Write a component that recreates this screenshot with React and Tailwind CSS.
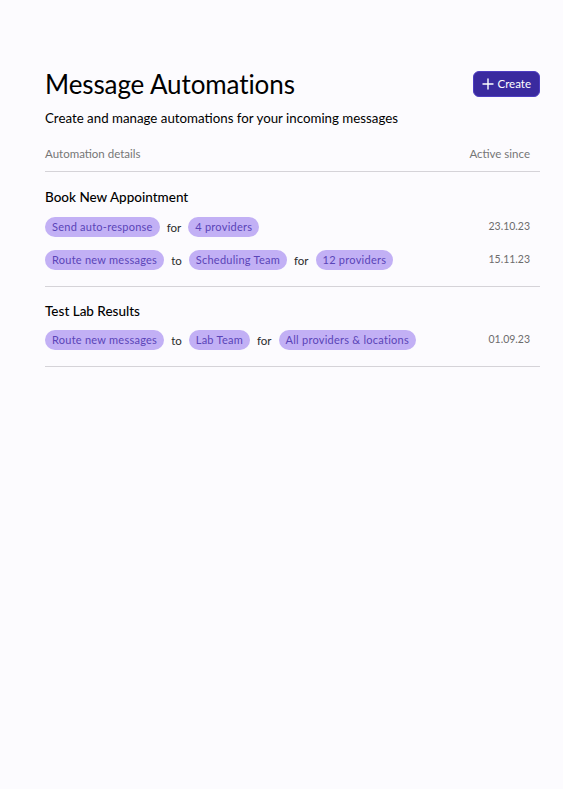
import React from "react";

const automations = [
    {
        name: "Book New Appointment",
        rules: [
            { parts: [["pill", "Send auto-response"], ["word", "for"], ["pill", "4 providers"]], since: "23.10.23" },
            {
                parts: [["pill", "Route new messages"], ["word", "to"], ["pill", "Scheduling Team"], ["word", "for"], ["pill", "12 providers"]],
                since: "15.11.23",
            },
        ],
    },
    {
        name: "Test Lab Results",
        rules: [
            {
                parts: [["pill", "Route new messages"], ["word", "to"], ["pill", "Lab Team"], ["word", "for"], ["pill", "All providers & locations"]],
                since: "01.09.23",
            },
        ],
    },
];

function Pill({ children }) {
    return (
        <span className="inline-flex items-center h-[20px] px-[7px] rounded-full bg-[#c2b0f5] text-[#5a44b8] text-[11px] tracking-[0.25px]">
            {children}
        </span>
    );
}

export default function App() {
    return (
        <div className="min-h-[789px] bg-[#fcfbfe] font-['Lato',sans-serif] text-black">
            <div className="pl-[45px] pr-[23px] pt-[71px]">
                {/* Header */}
                <div className="flex items-center justify-between">
                    <h1 className="text-[26px] leading-[26px] font-normal tracking-[-0.1px]">Message Automations</h1>
                    <button className="flex items-center gap-[4px] h-[26px] px-[8px] rounded-md bg-[#3a2a9f] border border-[#4d3dc2] text-white text-[11.5px]">
                        <svg width="12" height="12" viewBox="0 0 12 12" fill="none" stroke="currentColor" strokeWidth="1.4" strokeLinecap="round">
                            <path d="M6 1v10M1 6h10" />
                        </svg>
                        Create
                    </button>
                </div>
                <p className="mt-[12px] text-[13.3px] leading-[18px]">Create and manage automations for your incoming messages</p>

                {/* Table */}
                <div className="mt-[18px]">
                    <div className="flex justify-between text-[11.5px] text-[#767676] pb-[9px] border-b border-[#d5d3d8] pr-[10px]">
                        <span>Automation details</span>
                        <span>Active since</span>
                    </div>
                    {automations.map((a, idx) => (
                        <div key={a.name} className={`border-b border-[#d5d3d8] pb-[16px] ${idx === 0 ? "pt-[16px]" : "pt-[15px]"}`}>
                            <div className="text-[13.5px] font-medium leading-[18px]">{a.name}</div>
                            <div className={`flex flex-col gap-[13px] ${idx === 0 ? "mt-[11px]" : "mt-[10px]"}`}>
                                {a.rules.map((r, i) => (
                                    <div key={i} className="flex items-center justify-between">
                                        <div className="flex items-center gap-[7px]">
                                            {r.parts.map(([kind, text], j) =>
                                                kind === "pill" ? (
                                                    <Pill key={j}>{text}</Pill>
                                                ) : (
                                                    <span key={j} className="text-[11.5px] text-[#2a2a2a]">
                                                        {text}
                                                    </span>
                                                )
                                            )}
                                        </div>
                                        <span className="text-[10.5px] text-[#6c6c6c] pr-[10px]">{r.since}</span>
                                    </div>
                                ))}
                            </div>
                        </div>
                    ))}
                </div>
            </div>
        </div>
    );
}
